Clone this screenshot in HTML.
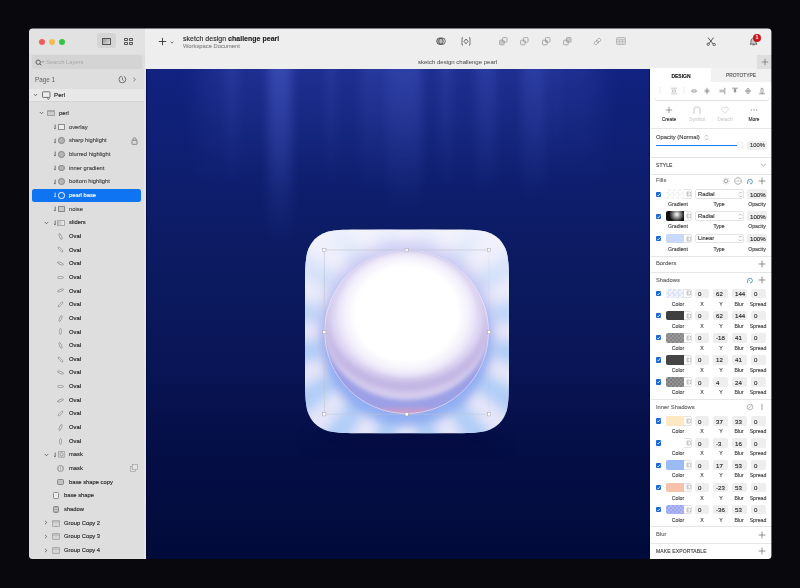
<!DOCTYPE html><html><head><meta charset="utf-8"><style>
*{margin:0;padding:0;box-sizing:border-box}
html,body{width:800px;height:588px;overflow:hidden;background:#08080d;font-family:"Liberation Sans",sans-serif}
#win{position:absolute;left:0;top:0;width:800px;height:588px;clip-path:inset(28.6px 28.6px 28.9px 29px round 3.5px);filter:blur(0.5px)}
.a{position:absolute}
.t{position:absolute;white-space:nowrap;line-height:1;-webkit-text-stroke:0.13px currentColor;will-change:transform}
</style></head><body><div id="win">
<div class="a" style="left:0px;top:0px;width:145px;height:588px;background:#dedede"></div>
<div class="a" style="left:0px;top:0px;width:145px;height:54px;background:#e2e2e2"></div>
<div class="a" style="left:145px;top:0px;width:655px;height:69px;background:#eeeeee"></div>
<div class="a" style="left:145px;top:69px;width:506px;height:520px;background:#0d1a63;overflow:hidden"></div>
<div class="a" style="left:650px;top:69px;width:150px;height:520px;background:#fff"></div>
<div class="a" style="left:38.550000000000004px;top:38.550000000000004px;width:6.1px;height:6.1px;border-radius:50%;background:#ed5e5b"></div>
<div class="a" style="left:48.75px;top:38.550000000000004px;width:6.1px;height:6.1px;border-radius:50%;background:#f3bb4d"></div>
<div class="a" style="left:58.75px;top:38.550000000000004px;width:6.1px;height:6.1px;border-radius:50%;background:#33c447"></div>
<div class="a" style="left:96.5px;top:33px;width:19.7px;height:15.3px;background:#d5d5d5;border-radius:2.5px"></div>
<div class="a" style="left:102.4px;top:37.9px;width:8.6px;height:6.9px;border:1px solid #555;border-radius:0.6px;background:linear-gradient(135deg,#999,#ddd)"></div>
<div class="a" style="left:124px;top:38.3px;width:3.8px;height:2.9px;border:0.9px solid #555;border-radius:0.8px"></div>
<div class="a" style="left:124px;top:41.8px;width:3.8px;height:2.9px;border:0.9px solid #555;border-radius:0.8px"></div>
<div class="a" style="left:129.2px;top:38.3px;width:3.8px;height:2.9px;border:0.9px solid #555;border-radius:0.8px"></div>
<div class="a" style="left:129.2px;top:41.8px;width:3.8px;height:2.9px;border:0.9px solid #555;border-radius:0.8px"></div>
<div class="a" style="left:31.7px;top:55.3px;width:110.3px;height:13.3px;background:#d4d4d4;border-radius:2px"></div>
<svg class="a" style="left:34.5px;top:58.5px;" width="10" height="8" viewBox="0 0 10 8"><circle cx="3.2" cy="3.2" r="2.2" fill="none" stroke="#444" stroke-width="0.8"/><path d="M4.8 4.8 L6.4 6.4" stroke="#444" stroke-width="0.8"/><path d="M7 2.4 l0.9 0.9 l0.9 -0.9" fill="none" stroke="#444" stroke-width="0.7"/></svg>
<div class="t" style="left:46.3px;top:60.08px;font-size:5.8px;color:#a8a8a8;font-weight:normal;-webkit-text-stroke:0">Search Layers</div>
<div class="t" style="left:35.2px;top:76.68px;font-size:6.3px;color:#666;font-weight:normal;-webkit-text-stroke:0.05px #666">Page 1</div>
<svg class="a" style="left:118px;top:75px;" width="9" height="9" viewBox="0 0 9 9"><circle cx="4.4" cy="4.4" r="3.4" fill="none" stroke="#555" stroke-width="0.8" stroke-dasharray="15 2"/><path d="M4.4 2.4 V4.6 L5.6 5.6" fill="none" stroke="#555" stroke-width="0.8"/></svg>
<svg class="a" style="left:132px;top:77px;" width="5" height="5" viewBox="0 0 5 5"><path d="M1.5 0.8 L3.4 2.5 L1.5 4.2" fill="none" stroke="#666" stroke-width="0.8"/></svg>
<div class="a" style="left:29px;top:88.5px;width:116px;height:12.8px;background:#e8e8e8"></div>
<div class="a" style="left:29px;top:101.3px;width:116px;height:0.7px;background:#d4d4d4"></div>
<svg class="a" style="left:33.1px;top:93.2px;" width="5" height="4" viewBox="0 0 5 4"><path d="M0.8 1 L2.5 2.8 L4.2 1" fill="none" stroke="#555" stroke-width="0.8"/></svg>
<svg class="a" style="left:42px;top:90.5px;" width="9" height="9" viewBox="0 0 9 9"><rect x="0.5" y="0.8" width="7.5" height="5.6" rx="0.6" fill="#eee" stroke="#555" stroke-width="0.8"/><path d="M5 7.2 L6.5 8.6 L7.5 6.8" fill="none" stroke="#555" stroke-width="0.7"/></svg>
<div class="t" style="left:53.9px;top:92.02px;font-size:6.2px;color:#1a1a1a;font-weight:normal;">Perl</div>
<svg class="a" style="left:39.0px;top:111.3px;" width="5" height="4" viewBox="0 0 5 4"><path d="M0.8 1 L2.5 2.8 L4.2 1" fill="none" stroke="#555" stroke-width="0.8"/></svg>
<svg class="a" style="left:47px;top:109.8px;" width="8" height="6" viewBox="0 0 8 6"><rect x="0.4" y="0.4" width="7.2" height="5.2" rx="0.5" fill="#ccc" stroke="#777" stroke-width="0.6"/><rect x="0.4" y="0.4" width="7.2" height="1.6" fill="#aaa"/></svg>
<div class="t" style="left:58.75px;top:110.98px;font-size:5.8px;color:#262626;font-weight:normal;">perl</div>
<svg class="a" style="left:52.5px;top:124.1px;" width="3.5" height="6" viewBox="0 0 3.5 6"><path d="M2.2 0.6 V5 M2.2 5 L0.9 3.9" fill="none" stroke="#444" stroke-width="0.7"/></svg>
<div class="a" style="left:58.4px;top:123.89999999999999px;width:6.3px;height:6.3px;border:0.6px solid #8a8a8a;border-radius:0.6px;background:#ececec"></div>
<div class="t" style="left:68.9px;top:124.78px;font-size:5.8px;color:#444;font-weight:normal;">overlay</div>
<svg class="a" style="left:52.5px;top:137.75px;" width="3.5" height="6" viewBox="0 0 3.5 6"><path d="M2.2 0.6 V5 M2.2 5 L0.9 3.9" fill="none" stroke="#444" stroke-width="0.7"/></svg>
<div class="a" style="left:58.4px;top:137.45px;width:6.6px;height:6.6px;border:0.6px solid #888;border-radius:50%;background:#b4b4b4"></div>
<div class="t" style="left:68.9px;top:138.43px;font-size:5.8px;color:#444;font-weight:normal;">sharp highlight</div>
<svg class="a" style="left:130.5px;top:137.05px;" width="7" height="8" viewBox="0 0 7 8"><rect x="1" y="3.3" width="5" height="4" rx="0.5" fill="none" stroke="#666" stroke-width="0.7"/><path d="M2 3.3 V2.2 A1.5 1.5 0 0 1 5 2.2 V3.3" fill="none" stroke="#666" stroke-width="0.7"/></svg>
<svg class="a" style="left:52.5px;top:151.4px;" width="3.5" height="6" viewBox="0 0 3.5 6"><path d="M2.2 0.6 V5 M2.2 5 L0.9 3.9" fill="none" stroke="#444" stroke-width="0.7"/></svg>
<div class="a" style="left:58.4px;top:151.1px;width:6.6px;height:6.6px;border:0.6px solid #888;border-radius:50%;background:#b4b4b4"></div>
<div class="t" style="left:68.9px;top:152.08px;font-size:5.8px;color:#444;font-weight:normal;">blurred highlight</div>
<svg class="a" style="left:52.5px;top:165.05px;" width="3.5" height="6" viewBox="0 0 3.5 6"><path d="M2.2 0.6 V5 M2.2 5 L0.9 3.9" fill="none" stroke="#444" stroke-width="0.7"/></svg>
<div class="a" style="left:58.4px;top:164.75px;width:6.6px;height:6.6px;border:0.6px solid #888;border-radius:50%;background:#b4b4b4"></div>
<div class="t" style="left:68.9px;top:165.73px;font-size:5.8px;color:#444;font-weight:normal;">inner gradient</div>
<svg class="a" style="left:52.5px;top:178.7px;" width="3.5" height="6" viewBox="0 0 3.5 6"><path d="M2.2 0.6 V5 M2.2 5 L0.9 3.9" fill="none" stroke="#444" stroke-width="0.7"/></svg>
<div class="a" style="left:58.4px;top:178.39999999999998px;width:6.6px;height:6.6px;border:0.6px solid #888;border-radius:50%;background:#b4b4b4"></div>
<div class="t" style="left:68.9px;top:179.38px;font-size:5.8px;color:#444;font-weight:normal;">bottom highlight</div>
<div class="a" style="left:31.7px;top:189.04999999999998px;width:109.5px;height:12.8px;background:#0e74f2;border-radius:2.5px"></div>
<svg class="a" style="left:52.5px;top:192.35px;" width="3.5" height="6" viewBox="0 0 3.5 6"><path d="M2.2 0.6 V5 M2.2 5 L0.9 3.9" fill="none" stroke="#fff" stroke-width="0.7"/></svg>
<div class="a" style="left:58.4px;top:192.04999999999998px;width:6.6px;height:6.6px;border:0.9px solid #fff;border-radius:50%"></div>
<div class="t" style="left:68.9px;top:193.03px;font-size:5.8px;color:#fff;font-weight:normal;">pearl base</div>
<svg class="a" style="left:52.5px;top:206.0px;" width="3.5" height="6" viewBox="0 0 3.5 6"><path d="M2.2 0.6 V5 M2.2 5 L0.9 3.9" fill="none" stroke="#444" stroke-width="0.7"/></svg>
<div class="a" style="left:58.2px;top:205.8px;width:6.5px;height:6.5px;border:0.7px solid #888;border-radius:0.8px;background:#c9c9c9"></div>
<div class="t" style="left:68.9px;top:206.68px;font-size:5.8px;color:#444;font-weight:normal;">noise</div>
<svg class="a" style="left:43.7px;top:220.64999999999998px;" width="5" height="4" viewBox="0 0 5 4"><path d="M0.8 1 L2.5 2.8 L4.2 1" fill="none" stroke="#555" stroke-width="0.8"/></svg>
<svg class="a" style="left:52.5px;top:219.64999999999998px;" width="3.5" height="6" viewBox="0 0 3.5 6"><path d="M2.2 0.6 V5 M2.2 5 L0.9 3.9" fill="none" stroke="#444" stroke-width="0.7"/></svg>
<div class="a" style="left:57.2px;top:219.64999999999998px;width:8.2px;height:6px;background:linear-gradient(90deg,#bbb,#eee);border:0.5px solid #aaa"></div>
<div class="t" style="left:68.9px;top:220.33px;font-size:5.8px;color:#262626;font-weight:normal;">sliders</div>
<svg class="a" style="left:57.3px;top:232.8px;" width="7" height="7" viewBox="0 0 7 7"><g transform="rotate(67.5 3.5 3.5)"><ellipse cx="3.5" cy="3.5" rx="3.2" ry="1.0" fill="#e4e4e4" stroke="#777" stroke-width="0.55"/></g></svg>
<div class="t" style="left:68.9px;top:233.98px;font-size:5.8px;color:#111;font-weight:normal;">Oval</div>
<svg class="a" style="left:57.3px;top:246.45px;" width="7" height="7" viewBox="0 0 7 7"><g transform="rotate(45 3.5 3.5)"><ellipse cx="3.5" cy="3.5" rx="3.2" ry="1.0" fill="#e4e4e4" stroke="#777" stroke-width="0.55"/></g></svg>
<div class="t" style="left:68.9px;top:247.63px;font-size:5.8px;color:#111;font-weight:normal;">Oval</div>
<svg class="a" style="left:57.3px;top:260.1px;" width="7" height="7" viewBox="0 0 7 7"><g transform="rotate(22.5 3.5 3.5)"><ellipse cx="3.5" cy="3.5" rx="3.2" ry="1.0" fill="#e4e4e4" stroke="#777" stroke-width="0.55"/></g></svg>
<div class="t" style="left:68.9px;top:261.28px;font-size:5.8px;color:#111;font-weight:normal;">Oval</div>
<svg class="a" style="left:57.3px;top:273.75px;" width="7" height="7" viewBox="0 0 7 7"><g transform="rotate(0 3.5 3.5)"><ellipse cx="3.5" cy="3.5" rx="3.2" ry="1.0" fill="#e4e4e4" stroke="#777" stroke-width="0.55"/></g></svg>
<div class="t" style="left:68.9px;top:274.93px;font-size:5.8px;color:#111;font-weight:normal;">Oval</div>
<svg class="a" style="left:57.3px;top:287.4px;" width="7" height="7" viewBox="0 0 7 7"><g transform="rotate(-22.5 3.5 3.5)"><ellipse cx="3.5" cy="3.5" rx="3.2" ry="1.0" fill="#e4e4e4" stroke="#777" stroke-width="0.55"/></g></svg>
<div class="t" style="left:68.9px;top:288.58px;font-size:5.8px;color:#111;font-weight:normal;">Oval</div>
<svg class="a" style="left:57.3px;top:301.05px;" width="7" height="7" viewBox="0 0 7 7"><g transform="rotate(-45 3.5 3.5)"><ellipse cx="3.5" cy="3.5" rx="3.2" ry="1.0" fill="#e4e4e4" stroke="#777" stroke-width="0.55"/></g></svg>
<div class="t" style="left:68.9px;top:302.23px;font-size:5.8px;color:#111;font-weight:normal;">Oval</div>
<svg class="a" style="left:57.3px;top:314.7px;" width="7" height="7" viewBox="0 0 7 7"><g transform="rotate(-67.5 3.5 3.5)"><ellipse cx="3.5" cy="3.5" rx="3.2" ry="1.0" fill="#e4e4e4" stroke="#777" stroke-width="0.55"/></g></svg>
<div class="t" style="left:68.9px;top:315.88px;font-size:5.8px;color:#111;font-weight:normal;">Oval</div>
<svg class="a" style="left:57.3px;top:328.35px;" width="7" height="7" viewBox="0 0 7 7"><g transform="rotate(90 3.5 3.5)"><ellipse cx="3.5" cy="3.5" rx="3.2" ry="1.0" fill="#e4e4e4" stroke="#777" stroke-width="0.55"/></g></svg>
<div class="t" style="left:68.9px;top:329.53px;font-size:5.8px;color:#111;font-weight:normal;">Oval</div>
<svg class="a" style="left:57.3px;top:342.0px;" width="7" height="7" viewBox="0 0 7 7"><g transform="rotate(67.5 3.5 3.5)"><ellipse cx="3.5" cy="3.5" rx="3.2" ry="1.0" fill="#e4e4e4" stroke="#777" stroke-width="0.55"/></g></svg>
<div class="t" style="left:68.9px;top:343.18px;font-size:5.8px;color:#111;font-weight:normal;">Oval</div>
<svg class="a" style="left:57.3px;top:355.65px;" width="7" height="7" viewBox="0 0 7 7"><g transform="rotate(45 3.5 3.5)"><ellipse cx="3.5" cy="3.5" rx="3.2" ry="1.0" fill="#e4e4e4" stroke="#777" stroke-width="0.55"/></g></svg>
<div class="t" style="left:68.9px;top:356.83px;font-size:5.8px;color:#111;font-weight:normal;">Oval</div>
<svg class="a" style="left:57.3px;top:369.3px;" width="7" height="7" viewBox="0 0 7 7"><g transform="rotate(22.5 3.5 3.5)"><ellipse cx="3.5" cy="3.5" rx="3.2" ry="1.0" fill="#e4e4e4" stroke="#777" stroke-width="0.55"/></g></svg>
<div class="t" style="left:68.9px;top:370.48px;font-size:5.8px;color:#111;font-weight:normal;">Oval</div>
<svg class="a" style="left:57.3px;top:382.95000000000005px;" width="7" height="7" viewBox="0 0 7 7"><g transform="rotate(0 3.5 3.5)"><ellipse cx="3.5" cy="3.5" rx="3.2" ry="1.0" fill="#e4e4e4" stroke="#777" stroke-width="0.55"/></g></svg>
<div class="t" style="left:68.9px;top:384.13px;font-size:5.8px;color:#111;font-weight:normal;">Oval</div>
<svg class="a" style="left:57.3px;top:396.6px;" width="7" height="7" viewBox="0 0 7 7"><g transform="rotate(-22.5 3.5 3.5)"><ellipse cx="3.5" cy="3.5" rx="3.2" ry="1.0" fill="#e4e4e4" stroke="#777" stroke-width="0.55"/></g></svg>
<div class="t" style="left:68.9px;top:397.78px;font-size:5.8px;color:#111;font-weight:normal;">Oval</div>
<svg class="a" style="left:57.3px;top:410.25px;" width="7" height="7" viewBox="0 0 7 7"><g transform="rotate(-45 3.5 3.5)"><ellipse cx="3.5" cy="3.5" rx="3.2" ry="1.0" fill="#e4e4e4" stroke="#777" stroke-width="0.55"/></g></svg>
<div class="t" style="left:68.9px;top:411.43px;font-size:5.8px;color:#111;font-weight:normal;">Oval</div>
<svg class="a" style="left:57.3px;top:423.9px;" width="7" height="7" viewBox="0 0 7 7"><g transform="rotate(-67.5 3.5 3.5)"><ellipse cx="3.5" cy="3.5" rx="3.2" ry="1.0" fill="#e4e4e4" stroke="#777" stroke-width="0.55"/></g></svg>
<div class="t" style="left:68.9px;top:425.08px;font-size:5.8px;color:#111;font-weight:normal;">Oval</div>
<svg class="a" style="left:57.3px;top:437.54999999999995px;" width="7" height="7" viewBox="0 0 7 7"><g transform="rotate(90 3.5 3.5)"><ellipse cx="3.5" cy="3.5" rx="3.2" ry="1.0" fill="#e4e4e4" stroke="#777" stroke-width="0.55"/></g></svg>
<div class="t" style="left:68.9px;top:438.73px;font-size:5.8px;color:#111;font-weight:normal;">Oval</div>
<svg class="a" style="left:44.1px;top:452.70000000000005px;" width="5" height="4" viewBox="0 0 5 4"><path d="M0.8 1 L2.5 2.8 L4.2 1" fill="none" stroke="#555" stroke-width="0.8"/></svg>
<svg class="a" style="left:52.5px;top:451.70000000000005px;" width="3.5" height="6" viewBox="0 0 3.5 6"><path d="M2.2 0.6 V5 M2.2 5 L0.9 3.9" fill="none" stroke="#444" stroke-width="0.7"/></svg>
<svg class="a" style="left:58.2px;top:451.40000000000003px;" width="7.2" height="6.6" viewBox="0 0 7.2 6.6"><rect x="0.4" y="0.4" width="6.4" height="5.8" rx="0.6" fill="none" stroke="#777" stroke-width="0.6"/><circle cx="3.6" cy="3.3" r="1.7" fill="none" stroke="#777" stroke-width="0.6"/></svg>
<div class="t" style="left:69.1px;top:452.38px;font-size:5.8px;color:#262626;font-weight:normal;">mask</div>
<div class="a" style="left:57.4px;top:465.05px;width:6.8px;height:6.8px;border:0.6px solid #999;border-radius:50%;background:repeating-linear-gradient(90deg,#bbb 0 1px,#ddd 1px 2px)"></div>
<div class="t" style="left:68.7px;top:466.03px;font-size:5.8px;color:#262626;font-weight:normal;">mask</div>
<svg class="a" style="left:129.5px;top:464.35px;" width="8.5" height="8" viewBox="0 0 8.5 8"><rect x="0.5" y="2.5" width="5" height="5" fill="none" stroke="#999" stroke-width="0.6"/><rect x="2.5" y="0.5" width="5" height="5" fill="#e3e3e3" stroke="#999" stroke-width="0.6"/></svg>
<div class="a" style="left:57.4px;top:478.6px;width:6.8px;height:6.8px;border:0.6px solid #888;border-radius:1.5px;background:#c2c2c2"></div>
<div class="t" style="left:68.7px;top:479.68px;font-size:5.8px;color:#262626;font-weight:normal;">base shape copy</div>
<div class="a" style="left:52.5px;top:492.25px;width:6.5px;height:6.8px;border:0.7px solid #888;border-radius:1.5px;background:#ececec"></div>
<div class="t" style="left:63.6px;top:493.33px;font-size:5.8px;color:#262626;font-weight:normal;">base shape</div>
<div class="a" style="left:52.5px;top:505.9px;width:6.5px;height:6.8px;border:0.6px solid #888;border-radius:1.5px;background:repeating-linear-gradient(0deg,#aaa 0 1px,#ccc 1px 2px)"></div>
<div class="t" style="left:63.6px;top:506.98px;font-size:5.8px;color:#262626;font-weight:normal;">shadow</div>
<svg class="a" style="left:44px;top:520.45px;" width="4" height="5" viewBox="0 0 4 5"><path d="M1 0.8 L2.8 2.5 L1 4.2" fill="none" stroke="#555" stroke-width="0.8"/></svg>
<svg class="a" style="left:51.9px;top:519.5500000000001px;" width="8" height="7" viewBox="0 0 8 7"><rect x="0.4" y="0.6" width="7.2" height="5.8" rx="0.5" fill="#d6d6d6" stroke="#888" stroke-width="0.6"/><path d="M0.4 2 H7.6" stroke="#888" stroke-width="0.5"/></svg>
<div class="t" style="left:63.6px;top:520.63px;font-size:5.8px;color:#262626;font-weight:normal;">Group Copy 2</div>
<svg class="a" style="left:44px;top:534.1px;" width="4" height="5" viewBox="0 0 4 5"><path d="M1 0.8 L2.8 2.5 L1 4.2" fill="none" stroke="#555" stroke-width="0.8"/></svg>
<svg class="a" style="left:51.9px;top:533.2px;" width="8" height="7" viewBox="0 0 8 7"><rect x="0.4" y="0.6" width="7.2" height="5.8" rx="0.5" fill="#d6d6d6" stroke="#888" stroke-width="0.6"/><path d="M0.4 2 H7.6" stroke="#888" stroke-width="0.5"/></svg>
<div class="t" style="left:63.6px;top:534.28px;font-size:5.8px;color:#262626;font-weight:normal;">Group Copy 3</div>
<svg class="a" style="left:44px;top:547.75px;" width="4" height="5" viewBox="0 0 4 5"><path d="M1 0.8 L2.8 2.5 L1 4.2" fill="none" stroke="#555" stroke-width="0.8"/></svg>
<svg class="a" style="left:51.9px;top:546.85px;" width="8" height="7" viewBox="0 0 8 7"><rect x="0.4" y="0.6" width="7.2" height="5.8" rx="0.5" fill="#d6d6d6" stroke="#888" stroke-width="0.6"/><path d="M0.4 2 H7.6" stroke="#888" stroke-width="0.5"/></svg>
<div class="t" style="left:63.6px;top:547.93px;font-size:5.8px;color:#262626;font-weight:normal;">Group Copy 4</div>
<svg class="a" style="left:145px;top:69px" width="505" height="490" viewBox="145 69 505 490">
<defs>
<linearGradient id="bg" x1="0" y1="0" x2="0" y2="1">
 <stop offset="0" stop-color="#112280"/><stop offset="0.37" stop-color="#0c1b62"/><stop offset="0.6" stop-color="#091556"/><stop offset="0.75" stop-color="#050f48"/><stop offset="1" stop-color="#010b3a"/>
</linearGradient>
<linearGradient id="rayg" x1="0" y1="0" x2="0" y2="1">
 <stop offset="0" stop-color="#5c70e0" stop-opacity="1"/><stop offset="0.4" stop-color="#5c70e0" stop-opacity="0.65"/><stop offset="1" stop-color="#5c70e0" stop-opacity="0"/>
</linearGradient>
<filter id="rb" x="-3" y="-0.2" width="7" height="1.4"><feGaussianBlur stdDeviation="5 4"/></filter>
<filter id="b1" x="-0.2" y="-0.2" width="1.4" height="1.4"><feGaussianBlur stdDeviation="1"/></filter>
<filter id="b2" x="-0.2" y="-0.2" width="1.4" height="1.4"><feGaussianBlur stdDeviation="2"/></filter>
<filter id="b3" x="-0.3" y="-0.3" width="1.6" height="1.6"><feGaussianBlur stdDeviation="3"/></filter>
<filter id="b4" x="-0.3" y="-0.3" width="1.6" height="1.6"><feGaussianBlur stdDeviation="4"/></filter>
<filter id="b5" x="-0.3" y="-0.3" width="1.6" height="1.6"><feGaussianBlur stdDeviation="5"/></filter>
<filter id="b6" x="-0.5" y="-0.5" width="2" height="2"><feGaussianBlur stdDeviation="6"/></filter>
<filter id="b8" x="-0.5" y="-0.5" width="2" height="2"><feGaussianBlur stdDeviation="8"/></filter>
<filter id="b10" x="-0.5" y="-0.5" width="2" height="2"><feGaussianBlur stdDeviation="10"/></filter>
<filter id="b12" x="-0.5" y="-0.5" width="2" height="2"><feGaussianBlur stdDeviation="12"/></filter>
<radialGradient id="wg"><stop offset="0" stop-color="#fff"/><stop offset="0.72" stop-color="#fff"/><stop offset="0.88" stop-color="#fff" stop-opacity="0.55"/><stop offset="1" stop-color="#fff" stop-opacity="0"/></radialGradient>
<linearGradient id="topw" x1="0" y1="0" x2="0" y2="1"><stop offset="0" stop-color="#f4f4fd" stop-opacity="0.9"/><stop offset="1" stop-color="#f4f4fd" stop-opacity="0"/></linearGradient>
<clipPath id="sqc"><path d="M356.97 229.60 L457.03 229.60 C471.99 229.60 479.47 230.39 486.22 231.83 C497.41 235.74 502.86 241.19 506.77 252.38 C508.21 259.13 509.00 266.61 509.00 281.57 L509.00 381.23 C509.00 396.19 508.21 403.67 506.77 410.42 C502.86 421.61 497.41 427.06 486.22 430.97 C479.47 432.41 471.99 433.20 457.03 433.20 L356.97 433.20 C342.01 433.20 334.53 432.41 327.78 430.97 C316.59 427.06 311.14 421.61 307.23 410.42 C305.79 403.67 305.00 396.19 305.00 381.23 L305.00 281.57 C305.00 266.61 305.79 259.13 307.23 252.38 C311.14 241.19 316.59 235.74 327.78 231.83 C334.53 230.39 342.01 229.60 356.97 229.60Z"/></clipPath>
<clipPath id="pc"><circle cx="406.6" cy="331.6" r="82.3"/></clipPath>
</defs>
<rect x="145" y="69" width="506" height="490" fill="url(#bg)"/>
<rect x="200" y="40" width="400" height="150" fill="url(#rayg)" opacity="0.2" filter="url(#b12)"/><rect x="225.0" y="50" width="14" height="139" fill="url(#rayg)" opacity="0.14" filter="url(#rb)"/><rect x="268.0" y="50" width="24" height="194" fill="url(#rayg)" opacity="0.42" filter="url(#rb)"/><rect x="326.0" y="50" width="10" height="139" fill="url(#rayg)" opacity="0.16" filter="url(#rb)"/><rect x="360.0" y="50" width="30" height="149" fill="url(#rayg)" opacity="0.16" filter="url(#rb)"/><rect x="388.0" y="50" width="34" height="164" fill="url(#rayg)" opacity="0.3" filter="url(#rb)"/><rect x="440.0" y="50" width="12" height="144" fill="url(#rayg)" opacity="0.18" filter="url(#rb)"/><rect x="476.0" y="50" width="20" height="149" fill="url(#rayg)" opacity="0.22" filter="url(#rb)"/><rect x="522.0" y="50" width="24" height="154" fill="url(#rayg)" opacity="0.24" filter="url(#rb)"/><rect x="551.0" y="50" width="10" height="129" fill="url(#rayg)" opacity="0.1" filter="url(#rb)"/>
<ellipse cx="406.6" cy="440" rx="100" ry="10" fill="#000530" opacity="0.25" filter="url(#b8)"/>
<path d="M356.97 229.60 L457.03 229.60 C471.99 229.60 479.47 230.39 486.22 231.83 C497.41 235.74 502.86 241.19 506.77 252.38 C508.21 259.13 509.00 266.61 509.00 281.57 L509.00 381.23 C509.00 396.19 508.21 403.67 506.77 410.42 C502.86 421.61 497.41 427.06 486.22 430.97 C479.47 432.41 471.99 433.20 457.03 433.20 L356.97 433.20 C342.01 433.20 334.53 432.41 327.78 430.97 C316.59 427.06 311.14 421.61 307.23 410.42 C305.79 403.67 305.00 396.19 305.00 381.23 L305.00 281.57 C305.00 266.61 305.79 259.13 307.23 252.38 C311.14 241.19 316.59 235.74 327.78 231.83 C334.53 230.39 342.01 229.60 356.97 229.60Z" fill="#e6e6f9"/>
<g clip-path="url(#sqc)">
 <g fill="#a2c6f6" opacity="0.8" filter="url(#b6)"><path d="M406.6 331.6 L565.8 347.6 L559.8 377.7Z"/><path d="M406.6 331.6 L547.5 407.3 L530.5 432.8Z"/><path d="M406.6 331.6 L507.8 455.5 L482.3 472.5Z"/><path d="M406.6 331.6 L452.7 484.8 L422.6 490.8Z"/><path d="M406.6 331.6 L390.6 490.8 L360.5 484.8Z"/><path d="M406.6 331.6 L330.9 472.5 L305.4 455.5Z"/><path d="M406.6 331.6 L282.7 432.8 L265.7 407.3Z"/><path d="M406.6 331.6 L253.4 377.7 L247.4 347.6Z"/><path d="M406.6 331.6 L247.4 315.6 L253.4 285.5Z"/><path d="M406.6 331.6 L265.7 255.9 L282.7 230.4Z"/><path d="M406.6 331.6 L305.4 207.7 L330.9 190.7Z"/><path d="M406.6 331.6 L360.5 178.4 L390.6 172.4Z"/><path d="M406.6 331.6 L422.6 172.4 L452.7 178.4Z"/><path d="M406.6 331.6 L482.3 190.7 L507.8 207.7Z"/><path d="M406.6 331.6 L530.5 230.4 L547.5 255.9Z"/><path d="M406.6 331.6 L559.8 285.5 L565.8 315.6Z"/></g>
 <rect x="305" y="230" width="204" height="110" fill="url(#topw)"/>
 <circle cx="406.6" cy="329.6" r="89.3" fill="#c9c8f1" opacity="0.75" filter="url(#b6)"/>
 <circle cx="406.6" cy="341.6" r="84.3" fill="#86a8f2" opacity="0.85" filter="url(#b5)"/>
</g>
<g clip-path="url(#pc)">
 <rect x="324.3" y="249.3" width="164.6" height="164.6" fill="#9ca0e6"/>
 <ellipse cx="406.6" cy="414.90000000000003" rx="60" ry="6.5" fill="#c89ecc" filter="url(#b2)"/>
 <ellipse cx="406.6" cy="324.6" rx="83.8" ry="75.3" fill="#d6cdee" filter="url(#b2)"/>
 <ellipse cx="406.6" cy="327.6" rx="81.3" ry="63.3" fill="#c0b2e2" filter="url(#b3)"/>
 <ellipse cx="406.6" cy="317.6" rx="77.3" ry="62.3" fill="#e4def6" filter="url(#b4)"/>
 <ellipse cx="406.6" cy="313.6" rx="71" ry="65" fill="url(#wg)"/>
</g>
<circle cx="406.6" cy="331.6" r="81.89999999999999" fill="none" stroke="#f4f0ff" stroke-width="0.7" opacity="0.8"/>
<path d="M324.3 414.3 V250 H489" fill="none" stroke="#c3c3cf" stroke-width="0.6"/>
<path d="M324.3 414.3 H489" fill="none" stroke="#c3c3cf" stroke-width="0.6" opacity="0.8"/><path d="M489 414.3 V250" fill="none" stroke="#c3c3cf" stroke-width="0.5" opacity="0.3"/>
<rect x="322.7" y="248.4" width="3.2" height="3.2" fill="#fff" stroke="#a0a0a8" stroke-width="0.5"/><rect x="322.7" y="330.54999999999995" width="3.2" height="3.2" fill="#fff" stroke="#a0a0a8" stroke-width="0.5"/><rect x="322.7" y="412.7" width="3.2" height="3.2" fill="#fff" stroke="#a0a0a8" stroke-width="0.5"/><rect x="405.04999999999995" y="248.4" width="3.2" height="3.2" fill="#fff" stroke="#a0a0a8" stroke-width="0.5"/><rect x="405.04999999999995" y="412.7" width="3.2" height="3.2" fill="#fff" stroke="#a0a0a8" stroke-width="0.5"/><rect x="487.4" y="248.4" width="3.2" height="3.2" fill="#fff" stroke="#a0a0a8" stroke-width="0.5"/><rect x="487.4" y="330.54999999999995" width="3.2" height="3.2" fill="#fff" stroke="#a0a0a8" stroke-width="0.5"/><rect x="487.4" y="412.7" width="3.2" height="3.2" fill="#fff" stroke="#a0a0a8" stroke-width="0.5"/>
</svg>
<div class="a" style="left:648.8px;top:69px;width:1.2px;height:490px;background:rgba(0,5,40,0.45)"></div>
<div class="a" style="left:143.8px;top:69px;width:2px;height:490px;background:#e4e4ec"></div>
<div class="a" style="left:145.8px;top:69px;width:1.3px;height:490px;background:rgba(0,5,40,0.55)"></div>
<div class="a" style="left:711px;top:55px;width:61px;height:14px;background:#eeeeee"></div>
<div class="a" style="left:711px;top:68.3px;width:61px;height:14px;background:#f1f1f1"></div>
<div class="a" style="left:650px;top:68.3px;width:61px;height:14px;background:#fff"></div>
<div class="t" style="left:660.7px;width:40px;text-align:center;top:74.1px;font-size:5px;color:#1a1a1a;font-weight:bold">DESIGN</div>
<div class="t" style="left:721.3px;width:40px;text-align:center;top:74.1px;font-size:4.9px;color:#555">PROTOTYPE</div>
<div class="a" style="left:655px;top:84.5px;width:114px;height:15.6px;background:#fff;border-radius:3px;box-shadow:0 1px 1.2px rgba(0,0,0,0.14)"></div>
<svg class="a" style="left:655.9px;top:86.9px;" width="8" height="8" viewBox="0 0 8 8"><path d="M4 0.5 V7.5" stroke="#c4c4c4" stroke-width="0.7" stroke-dasharray="0.8 1"/></svg>
<svg class="a" style="left:669.6px;top:86.9px;" width="8" height="8" viewBox="0 0 8 8"><path d="M1 1.2 H7 M1 6.8 H7" stroke="#aaa" stroke-width="0.6"/><rect x="2.2" y="3" width="3.6" height="2" fill="none" stroke="#aaa" stroke-width="0.6"/></svg>
<svg class="a" style="left:680.3px;top:86.9px;" width="8" height="8" viewBox="0 0 8 8"><path d="M4 0.5 V7.5" stroke="#c4c4c4" stroke-width="0.7" stroke-dasharray="0.8 1"/></svg>
<svg class="a" style="left:690.2px;top:86.9px;" width="8" height="8" viewBox="0 0 8 8"><rect x="1.8" y="3" width="4.4" height="2" rx="0.4" fill="none" stroke="#666" stroke-width="0.65"/></svg>
<svg class="a" style="left:703.2px;top:86.9px;" width="8" height="8" viewBox="0 0 8 8"><path d="M4 0.8 V7.2" stroke="#666" stroke-width="0.65"/><path d="M1.5 3.2 H6.5 M1.5 4.8 H6.5" stroke="#666" stroke-width="0.6"/></svg>
<svg class="a" style="left:717.6px;top:86.9px;" width="8" height="8" viewBox="0 0 8 8"><path d="M6.8 0.8 V7.2" stroke="#666" stroke-width="0.65"/><path d="M1.5 3.2 H6 M1.5 4.8 H6" stroke="#666" stroke-width="0.6"/></svg>
<svg class="a" style="left:730.6px;top:86.9px;" width="8" height="8" viewBox="0 0 8 8"><path d="M1 1.2 H7" stroke="#777" stroke-width="0.7"/><path d="M2.8 1.5 H5.2 V5.5 H2.8 Z" fill="#999"/></svg>
<svg class="a" style="left:744.3px;top:86.9px;" width="8" height="8" viewBox="0 0 8 8"><path d="M1 4 H7" stroke="#666" stroke-width="0.65"/><rect x="3" y="1.6" width="2" height="4.8" rx="0.4" fill="none" stroke="#666" stroke-width="0.6"/></svg>
<svg class="a" style="left:758.0px;top:86.9px;" width="8" height="8" viewBox="0 0 8 8"><path d="M1 6.8 H7" stroke="#666" stroke-width="0.65"/><rect x="3" y="1.4" width="2" height="4.6" rx="0.4" fill="none" stroke="#666" stroke-width="0.6"/></svg>
<svg class="a" style="left:664.6px;top:106.4px;" width="8" height="8" viewBox="0 0 8 8"><path d="M4 0.8 V7.2 M0.8 4 H7.2" stroke="#777" stroke-width="0.7"/></svg>
<svg class="a" style="left:693px;top:106.2px;" width="8" height="8.5" viewBox="0 0 8 8.5"><path d="M1 8 V4 A3 3 0 0 1 7 4 V8" fill="none" stroke="#ddd" stroke-width="1.6"/></svg>
<svg class="a" style="left:721px;top:106.2px;" width="8" height="8.5" viewBox="0 0 8 8.5"><path d="M4 7.5 L1 4.2 A1.8 1.8 0 0 1 4 2 A1.8 1.8 0 0 1 7 4.2 Z" fill="none" stroke="#ddd" stroke-width="1"/></svg>
<svg class="a" style="left:749.7px;top:108.4px;" width="8" height="4" viewBox="0 0 8 4"><path d="M0.8 2 H2 M3.4 2 H4.6 M6 2 H7.2" stroke="#777" stroke-width="0.9"/></svg>
<div class="t" style="left:648.6px;width:40px;text-align:center;top:118.1px;font-size:4.8px;color:#333">Create</div>
<div class="t" style="left:677px;width:40px;text-align:center;top:118.1px;font-size:4.8px;color:#d2d2d2">Symbol</div>
<div class="t" style="left:705px;width:40px;text-align:center;top:118.1px;font-size:4.8px;color:#d2d2d2">Detach</div>
<div class="t" style="left:733.7px;width:40px;text-align:center;top:118.1px;font-size:4.8px;color:#333">More</div>
<div class="a" style="left:651px;top:128.4px;width:121px;height:0.6px;background:#e6e6e6"></div>
<div class="t" style="left:656px;top:134.78px;font-size:5.8px;color:#444;font-weight:normal;">Opacity (Normal)</div>
<svg class="a" style="left:703.5px;top:133.6px;" width="5" height="7" viewBox="0 0 5 7"><path d="M1 2.6 L2.5 1.1 L4 2.6 M1 4.4 L2.5 5.9 L4 4.4" fill="none" stroke="#888" stroke-width="0.6"/></svg>
<div class="a" style="left:656px;top:145px;width:84px;height:1px;background:#1b7bf4;border-radius:1px"></div>
<div class="a" style="left:736.5px;top:141.8px;width:6.6px;height:6.6px;background:#fff;border-radius:50%;box-shadow:0 0 1px rgba(0,0,0,0.35)"></div>
<div class="a" style="left:747px;top:141px;width:19.6px;height:9px;background:#efefef;border-radius:2px"></div>
<div class="t" style="left:750px;top:143.18px;font-size:5.8px;color:#333;font-weight:normal;">100%</div>
<div class="a" style="left:651px;top:156.5px;width:121px;height:0.6px;background:#e6e6e6"></div>
<div class="t" style="left:656px;top:163.00px;font-size:5.0px;color:#444;font-weight:normal;letter-spacing:0.15px">STYLE</div>
<svg class="a" style="left:759.5px;top:163px;" width="7" height="4" viewBox="0 0 7 4"><path d="M1 0.8 L3.5 3 L6 0.8" fill="none" stroke="#888" stroke-width="0.7"/></svg>
<div class="a" style="left:651px;top:174px;width:121px;height:0.6px;background:#e6e6e6"></div>
<div class="t" style="left:656px;top:178.18px;font-size:5.8px;color:#666;font-weight:normal;">Fills</div>
<svg class="a" style="left:721.7px;top:176.5px;" width="8" height="8" viewBox="0 0 8 8"><circle cx="4" cy="4" r="1.8" fill="none" stroke="#888" stroke-width="0.7"/><path d="M4 0.6 V1.6 M4 6.4 V7.4 M0.6 4 H1.6 M6.4 4 H7.4 M1.6 1.6 L2.3 2.3 M5.7 5.7 L6.4 6.4 M6.4 1.6 L5.7 2.3 M1.6 6.4 L2.3 5.7" stroke="#888" stroke-width="0.6"/></svg>
<svg class="a" style="left:733.9px;top:176.5px;" width="8" height="8" viewBox="0 0 8 8"><path d="M2.6 0.9 H5.4 L7.1 2.6 V5.4 L5.4 7.1 H2.6 L0.9 5.4 V2.6 Z" fill="none" stroke="#888" stroke-width="0.7"/><path d="M2.5 4 H5.5" stroke="#888" stroke-width="0.6"/></svg>
<svg class="a" style="left:745.6px;top:176.5px;" width="8" height="8" viewBox="0 0 8 8"><path d="M1.6 7 V4.6 A2.4 2.4 0 1 1 4 7" fill="none" stroke="#3a7fd0" stroke-width="0.8"/><path d="M2.6 3.8 L4.2 5.4" stroke="#3a7fd0" stroke-width="0.7"/></svg>
<svg class="a" style="left:758px;top:176.5px;" width="8" height="8" viewBox="0 0 8 8"><path d="M4 0.6 V7.4 M0.6 4 H7.4" stroke="#666" stroke-width="0.7"/></svg>
<div class="a" style="left:656px;top:191.5px;width:5.4px;height:5.4px;background:#1a68d6;border-radius:1px"></div>
<svg class="a" style="left:656px;top:191.5px;" width="5.4" height="5.4" viewBox="0 0 5.4 5.4"><path d="M1.3 2.9 L2.3 3.9 L4.2 1.5" fill="none" stroke="#fff" stroke-width="0.8"/></svg>
<div class="a" style="left:665.7px;top:189.29999999999998px;width:26px;height:9.8px;background:#fff;border-radius:2px;border:0.6px solid #e2e2e2"></div>
<div class="a" style="left:665.7px;top:189.29999999999998px;width:18px;height:9.8px;background:repeating-conic-gradient(#f4f4f4 0 25%,#fff 0 50%) 0 0/5px 5px;border-radius:2px 0 0 2px"></div>
<svg class="a" style="left:685.5px;top:191.2px;" width="5" height="6" viewBox="0 0 5 6"><path d="M1 1 H3 A1.5 1.5 0 0 1 3 5 H1 Z M1 3 H3" fill="none" stroke="#999" stroke-width="0.6"/></svg>
<div class="a" style="left:694.5px;top:189.29999999999998px;width:49.5px;height:9.8px;background:#fff;border:0.6px solid #e4e4e4;border-radius:2px"></div>
<div class="t" style="left:697.5px;top:191.88px;font-size:5.8px;color:#333;font-weight:normal;">Radial</div>
<svg class="a" style="left:737.5px;top:190.7px;" width="5" height="7" viewBox="0 0 5 7"><path d="M1 2.5 L2.5 1 L4 2.5 M1 4.5 L2.5 6 L4 4.5" fill="none" stroke="#888" stroke-width="0.6"/></svg>
<div class="a" style="left:747.2px;top:189.29999999999998px;width:19.399999999999977px;height:9.8px;background:#eeeeee;border-radius:2px"></div>
<div class="t" style="left:750.4000000000001px;top:191.76px;font-size:6.1px;color:#262626;font-weight:normal;">100%</div>
<div class="t" style="left:663px;width:30px;text-align:center;top:202.29999999999998px;font-size:5.2px;color:#444">Gradient</div>
<div class="t" style="left:704px;width:30px;text-align:center;top:202.29999999999998px;font-size:5.2px;color:#444">Type</div>
<div class="t" style="left:741.5px;width:30px;text-align:center;top:202.29999999999998px;font-size:5.2px;color:#444">Opacity</div>
<div class="a" style="left:656px;top:213.60000000000002px;width:5.4px;height:5.4px;background:#1a68d6;border-radius:1px"></div>
<svg class="a" style="left:656px;top:213.60000000000002px;" width="5.4" height="5.4" viewBox="0 0 5.4 5.4"><path d="M1.3 2.9 L2.3 3.9 L4.2 1.5" fill="none" stroke="#fff" stroke-width="0.8"/></svg>
<div class="a" style="left:665.7px;top:211.4px;width:26px;height:9.8px;background:#fff;border-radius:2px;border:0.6px solid #e2e2e2"></div>
<div class="a" style="left:665.7px;top:211.4px;width:18px;height:9.8px;background:radial-gradient(circle at 60% 35%,#fff 0,#999 25%,#111 60%);border-radius:2px 0 0 2px"></div>
<svg class="a" style="left:685.5px;top:213.3px;" width="5" height="6" viewBox="0 0 5 6"><path d="M1 1 H3 A1.5 1.5 0 0 1 3 5 H1 Z M1 3 H3" fill="none" stroke="#999" stroke-width="0.6"/></svg>
<div class="a" style="left:694.5px;top:211.4px;width:49.5px;height:9.8px;background:#fff;border:0.6px solid #e4e4e4;border-radius:2px"></div>
<div class="t" style="left:697.5px;top:213.98px;font-size:5.8px;color:#333;font-weight:normal;">Radial</div>
<svg class="a" style="left:737.5px;top:212.8px;" width="5" height="7" viewBox="0 0 5 7"><path d="M1 2.5 L2.5 1 L4 2.5 M1 4.5 L2.5 6 L4 4.5" fill="none" stroke="#888" stroke-width="0.6"/></svg>
<div class="a" style="left:747.2px;top:211.4px;width:19.399999999999977px;height:9.8px;background:#eeeeee;border-radius:2px"></div>
<div class="t" style="left:750.4000000000001px;top:213.86px;font-size:6.1px;color:#262626;font-weight:normal;">100%</div>
<div class="t" style="left:663px;width:30px;text-align:center;top:224.4px;font-size:5.2px;color:#444">Gradient</div>
<div class="t" style="left:704px;width:30px;text-align:center;top:224.4px;font-size:5.2px;color:#444">Type</div>
<div class="t" style="left:741.5px;width:30px;text-align:center;top:224.4px;font-size:5.2px;color:#444">Opacity</div>
<div class="a" style="left:656px;top:235.8px;width:5.4px;height:5.4px;background:#1a68d6;border-radius:1px"></div>
<svg class="a" style="left:656px;top:235.8px;" width="5.4" height="5.4" viewBox="0 0 5.4 5.4"><path d="M1.3 2.9 L2.3 3.9 L4.2 1.5" fill="none" stroke="#fff" stroke-width="0.8"/></svg>
<div class="a" style="left:665.7px;top:233.6px;width:26px;height:9.8px;background:#fff;border-radius:2px;border:0.6px solid #e2e2e2"></div>
<div class="a" style="left:665.7px;top:233.6px;width:18px;height:9.8px;background:#cad9fb;border-radius:2px 0 0 2px"></div>
<svg class="a" style="left:685.5px;top:235.5px;" width="5" height="6" viewBox="0 0 5 6"><path d="M1 1 H3 A1.5 1.5 0 0 1 3 5 H1 Z M1 3 H3" fill="none" stroke="#999" stroke-width="0.6"/></svg>
<div class="a" style="left:694.5px;top:233.6px;width:49.5px;height:9.8px;background:#fff;border:0.6px solid #e4e4e4;border-radius:2px"></div>
<div class="t" style="left:697.5px;top:236.18px;font-size:5.8px;color:#333;font-weight:normal;">Linear</div>
<svg class="a" style="left:737.5px;top:235.0px;" width="5" height="7" viewBox="0 0 5 7"><path d="M1 2.5 L2.5 1 L4 2.5 M1 4.5 L2.5 6 L4 4.5" fill="none" stroke="#888" stroke-width="0.6"/></svg>
<div class="a" style="left:747.2px;top:233.6px;width:19.399999999999977px;height:9.8px;background:#eeeeee;border-radius:2px"></div>
<div class="t" style="left:750.4000000000001px;top:236.06px;font-size:6.1px;color:#262626;font-weight:normal;">100%</div>
<div class="t" style="left:663px;width:30px;text-align:center;top:246.6px;font-size:5.2px;color:#444">Gradient</div>
<div class="t" style="left:704px;width:30px;text-align:center;top:246.6px;font-size:5.2px;color:#444">Type</div>
<div class="t" style="left:741.5px;width:30px;text-align:center;top:246.6px;font-size:5.2px;color:#444">Opacity</div>
<div class="a" style="left:651px;top:255.5px;width:121px;height:0.6px;background:#e6e6e6"></div>
<div class="t" style="left:656px;top:261.28px;font-size:5.8px;color:#666;font-weight:normal;">Borders</div>
<svg class="a" style="left:758px;top:259.6px;" width="8" height="8" viewBox="0 0 8 8"><path d="M4 0.6 V7.4 M0.6 4 H7.4" stroke="#666" stroke-width="0.7"/></svg>
<div class="a" style="left:651px;top:271.7px;width:121px;height:0.6px;background:#e6e6e6"></div>
<div class="t" style="left:656px;top:277.58px;font-size:5.8px;color:#666;font-weight:normal;">Shadows</div>
<svg class="a" style="left:758px;top:275.9px;" width="8" height="8" viewBox="0 0 8 8"><path d="M4 0.6 V7.4 M0.6 4 H7.4" stroke="#666" stroke-width="0.7"/></svg>
<svg class="a" style="left:745.6px;top:275.9px;" width="8" height="8" viewBox="0 0 8 8"><path d="M1.6 7 V4.6 A2.4 2.4 0 1 1 4 7" fill="none" stroke="#3a7fd0" stroke-width="0.8"/><path d="M2.6 3.8 L4.2 5.4" stroke="#3a7fd0" stroke-width="0.7"/></svg>
<div class="a" style="left:656px;top:290.7px;width:5.4px;height:5.4px;background:#1a68d6;border-radius:1px"></div>
<svg class="a" style="left:656px;top:290.7px;" width="5.4" height="5.4" viewBox="0 0 5.4 5.4"><path d="M1.3 2.9 L2.3 3.9 L4.2 1.5" fill="none" stroke="#fff" stroke-width="0.8"/></svg>
<div class="a" style="left:665.7px;top:288.5px;width:26px;height:9.8px;background:#fff;border-radius:2px;border:0.6px solid #e2e2e2"></div>
<div class="a" style="left:665.7px;top:288.5px;width:18px;height:9.8px;background:repeating-conic-gradient(#dde3fa 0 25%,#f3f5fd 0 50%) 0 0/5px 5px;border-radius:2px 0 0 2px"></div>
<svg class="a" style="left:685.5px;top:290.4px;" width="5" height="6" viewBox="0 0 5 6"><path d="M1 1 H3 A1.5 1.5 0 0 1 3 5 H1 Z M1 3 H3" fill="none" stroke="#999" stroke-width="0.6"/></svg>
<div class="a" style="left:694.6px;top:288.5px;width:14.399999999999977px;height:9.8px;background:#eeeeee;border-radius:2px"></div>
<div class="t" style="left:697.8000000000001px;top:290.96px;font-size:6.1px;color:#262626;font-weight:normal;">0</div>
<div class="a" style="left:712.6px;top:288.5px;width:15.899999999999977px;height:9.8px;background:#eeeeee;border-radius:2px"></div>
<div class="t" style="left:715.8000000000001px;top:290.96px;font-size:6.1px;color:#262626;font-weight:normal;">62</div>
<div class="a" style="left:731.8px;top:288.5px;width:15.200000000000045px;height:9.8px;background:#eeeeee;border-radius:2px"></div>
<div class="t" style="left:735.0px;top:290.96px;font-size:6.1px;color:#262626;font-weight:normal;">144</div>
<div class="a" style="left:750.6px;top:288.5px;width:15.600000000000023px;height:9.8px;background:#eeeeee;border-radius:2px"></div>
<div class="t" style="left:753.8000000000001px;top:290.96px;font-size:6.1px;color:#262626;font-weight:normal;">0</div>
<div class="t" style="left:663px;width:30px;text-align:center;top:301.49999999999994px;font-size:5.2px;color:#444">Color</div>
<div class="t" style="left:686.8px;width:30px;text-align:center;top:301.49999999999994px;font-size:5.2px;color:#444">X</div>
<div class="t" style="left:705.5px;width:30px;text-align:center;top:301.49999999999994px;font-size:5.2px;color:#444">Y</div>
<div class="t" style="left:724.4px;width:30px;text-align:center;top:301.49999999999994px;font-size:5.2px;color:#444">Blur</div>
<div class="t" style="left:743.4px;width:30px;text-align:center;top:301.49999999999994px;font-size:5.2px;color:#444">Spread</div>
<div class="a" style="left:656px;top:312.90000000000003px;width:5.4px;height:5.4px;background:#1a68d6;border-radius:1px"></div>
<svg class="a" style="left:656px;top:312.90000000000003px;" width="5.4" height="5.4" viewBox="0 0 5.4 5.4"><path d="M1.3 2.9 L2.3 3.9 L4.2 1.5" fill="none" stroke="#fff" stroke-width="0.8"/></svg>
<div class="a" style="left:665.7px;top:310.70000000000005px;width:26px;height:9.8px;background:#fff;border-radius:2px;border:0.6px solid #e2e2e2"></div>
<div class="a" style="left:665.7px;top:310.70000000000005px;width:18px;height:9.8px;background:#3f3f3f;border-radius:2px 0 0 2px"></div>
<svg class="a" style="left:685.5px;top:312.6px;" width="5" height="6" viewBox="0 0 5 6"><path d="M1 1 H3 A1.5 1.5 0 0 1 3 5 H1 Z M1 3 H3" fill="none" stroke="#999" stroke-width="0.6"/></svg>
<div class="a" style="left:694.6px;top:310.70000000000005px;width:14.399999999999977px;height:9.8px;background:#eeeeee;border-radius:2px"></div>
<div class="t" style="left:697.8000000000001px;top:313.16px;font-size:6.1px;color:#262626;font-weight:normal;">0</div>
<div class="a" style="left:712.6px;top:310.70000000000005px;width:15.899999999999977px;height:9.8px;background:#eeeeee;border-radius:2px"></div>
<div class="t" style="left:715.8000000000001px;top:313.16px;font-size:6.1px;color:#262626;font-weight:normal;">62</div>
<div class="a" style="left:731.8px;top:310.70000000000005px;width:15.200000000000045px;height:9.8px;background:#eeeeee;border-radius:2px"></div>
<div class="t" style="left:735.0px;top:313.16px;font-size:6.1px;color:#262626;font-weight:normal;">144</div>
<div class="a" style="left:750.6px;top:310.70000000000005px;width:15.600000000000023px;height:9.8px;background:#eeeeee;border-radius:2px"></div>
<div class="t" style="left:753.8000000000001px;top:313.16px;font-size:6.1px;color:#262626;font-weight:normal;">0</div>
<div class="t" style="left:663px;width:30px;text-align:center;top:323.7px;font-size:5.2px;color:#444">Color</div>
<div class="t" style="left:686.8px;width:30px;text-align:center;top:323.7px;font-size:5.2px;color:#444">X</div>
<div class="t" style="left:705.5px;width:30px;text-align:center;top:323.7px;font-size:5.2px;color:#444">Y</div>
<div class="t" style="left:724.4px;width:30px;text-align:center;top:323.7px;font-size:5.2px;color:#444">Blur</div>
<div class="t" style="left:743.4px;width:30px;text-align:center;top:323.7px;font-size:5.2px;color:#444">Spread</div>
<div class="a" style="left:656px;top:335.0px;width:5.4px;height:5.4px;background:#1a68d6;border-radius:1px"></div>
<svg class="a" style="left:656px;top:335.0px;" width="5.4" height="5.4" viewBox="0 0 5.4 5.4"><path d="M1.3 2.9 L2.3 3.9 L4.2 1.5" fill="none" stroke="#fff" stroke-width="0.8"/></svg>
<div class="a" style="left:665.7px;top:332.8px;width:26px;height:9.8px;background:#fff;border-radius:2px;border:0.6px solid #e2e2e2"></div>
<div class="a" style="left:665.7px;top:332.8px;width:18px;height:9.8px;background:repeating-conic-gradient(#858585 0 25%,#9c9c9c 0 50%) 0 0/4px 4px;border-radius:2px 0 0 2px"></div>
<svg class="a" style="left:685.5px;top:334.7px;" width="5" height="6" viewBox="0 0 5 6"><path d="M1 1 H3 A1.5 1.5 0 0 1 3 5 H1 Z M1 3 H3" fill="none" stroke="#999" stroke-width="0.6"/></svg>
<div class="a" style="left:694.6px;top:332.8px;width:14.399999999999977px;height:9.8px;background:#eeeeee;border-radius:2px"></div>
<div class="t" style="left:697.8000000000001px;top:335.26px;font-size:6.1px;color:#262626;font-weight:normal;">0</div>
<div class="a" style="left:712.6px;top:332.8px;width:15.899999999999977px;height:9.8px;background:#eeeeee;border-radius:2px"></div>
<div class="t" style="left:715.8000000000001px;top:335.26px;font-size:6.1px;color:#262626;font-weight:normal;">-18</div>
<div class="a" style="left:731.8px;top:332.8px;width:15.200000000000045px;height:9.8px;background:#eeeeee;border-radius:2px"></div>
<div class="t" style="left:735.0px;top:335.26px;font-size:6.1px;color:#262626;font-weight:normal;">41</div>
<div class="a" style="left:750.6px;top:332.8px;width:15.600000000000023px;height:9.8px;background:#eeeeee;border-radius:2px"></div>
<div class="t" style="left:753.8000000000001px;top:335.26px;font-size:6.1px;color:#262626;font-weight:normal;">0</div>
<div class="t" style="left:663px;width:30px;text-align:center;top:345.79999999999995px;font-size:5.2px;color:#444">Color</div>
<div class="t" style="left:686.8px;width:30px;text-align:center;top:345.79999999999995px;font-size:5.2px;color:#444">X</div>
<div class="t" style="left:705.5px;width:30px;text-align:center;top:345.79999999999995px;font-size:5.2px;color:#444">Y</div>
<div class="t" style="left:724.4px;width:30px;text-align:center;top:345.79999999999995px;font-size:5.2px;color:#444">Blur</div>
<div class="t" style="left:743.4px;width:30px;text-align:center;top:345.79999999999995px;font-size:5.2px;color:#444">Spread</div>
<div class="a" style="left:656px;top:357.2px;width:5.4px;height:5.4px;background:#1a68d6;border-radius:1px"></div>
<svg class="a" style="left:656px;top:357.2px;" width="5.4" height="5.4" viewBox="0 0 5.4 5.4"><path d="M1.3 2.9 L2.3 3.9 L4.2 1.5" fill="none" stroke="#fff" stroke-width="0.8"/></svg>
<div class="a" style="left:665.7px;top:355.0px;width:26px;height:9.8px;background:#fff;border-radius:2px;border:0.6px solid #e2e2e2"></div>
<div class="a" style="left:665.7px;top:355.0px;width:18px;height:9.8px;background:#454545;border-radius:2px 0 0 2px"></div>
<svg class="a" style="left:685.5px;top:356.9px;" width="5" height="6" viewBox="0 0 5 6"><path d="M1 1 H3 A1.5 1.5 0 0 1 3 5 H1 Z M1 3 H3" fill="none" stroke="#999" stroke-width="0.6"/></svg>
<div class="a" style="left:694.6px;top:355.0px;width:14.399999999999977px;height:9.8px;background:#eeeeee;border-radius:2px"></div>
<div class="t" style="left:697.8000000000001px;top:357.46px;font-size:6.1px;color:#262626;font-weight:normal;">0</div>
<div class="a" style="left:712.6px;top:355.0px;width:15.899999999999977px;height:9.8px;background:#eeeeee;border-radius:2px"></div>
<div class="t" style="left:715.8000000000001px;top:357.46px;font-size:6.1px;color:#262626;font-weight:normal;">12</div>
<div class="a" style="left:731.8px;top:355.0px;width:15.200000000000045px;height:9.8px;background:#eeeeee;border-radius:2px"></div>
<div class="t" style="left:735.0px;top:357.46px;font-size:6.1px;color:#262626;font-weight:normal;">41</div>
<div class="a" style="left:750.6px;top:355.0px;width:15.600000000000023px;height:9.8px;background:#eeeeee;border-radius:2px"></div>
<div class="t" style="left:753.8000000000001px;top:357.46px;font-size:6.1px;color:#262626;font-weight:normal;">0</div>
<div class="t" style="left:663px;width:30px;text-align:center;top:367.99999999999994px;font-size:5.2px;color:#444">Color</div>
<div class="t" style="left:686.8px;width:30px;text-align:center;top:367.99999999999994px;font-size:5.2px;color:#444">X</div>
<div class="t" style="left:705.5px;width:30px;text-align:center;top:367.99999999999994px;font-size:5.2px;color:#444">Y</div>
<div class="t" style="left:724.4px;width:30px;text-align:center;top:367.99999999999994px;font-size:5.2px;color:#444">Blur</div>
<div class="t" style="left:743.4px;width:30px;text-align:center;top:367.99999999999994px;font-size:5.2px;color:#444">Spread</div>
<div class="a" style="left:656px;top:379.40000000000003px;width:5.4px;height:5.4px;background:#1a68d6;border-radius:1px"></div>
<svg class="a" style="left:656px;top:379.40000000000003px;" width="5.4" height="5.4" viewBox="0 0 5.4 5.4"><path d="M1.3 2.9 L2.3 3.9 L4.2 1.5" fill="none" stroke="#fff" stroke-width="0.8"/></svg>
<div class="a" style="left:665.7px;top:377.20000000000005px;width:26px;height:9.8px;background:#fff;border-radius:2px;border:0.6px solid #e2e2e2"></div>
<div class="a" style="left:665.7px;top:377.20000000000005px;width:18px;height:9.8px;background:repeating-conic-gradient(#7e7e7e 0 25%,#959595 0 50%) 0 0/4px 4px;border-radius:2px 0 0 2px"></div>
<svg class="a" style="left:685.5px;top:379.1px;" width="5" height="6" viewBox="0 0 5 6"><path d="M1 1 H3 A1.5 1.5 0 0 1 3 5 H1 Z M1 3 H3" fill="none" stroke="#999" stroke-width="0.6"/></svg>
<div class="a" style="left:694.6px;top:377.20000000000005px;width:14.399999999999977px;height:9.8px;background:#eeeeee;border-radius:2px"></div>
<div class="t" style="left:697.8000000000001px;top:379.66px;font-size:6.1px;color:#262626;font-weight:normal;">0</div>
<div class="a" style="left:712.6px;top:377.20000000000005px;width:15.899999999999977px;height:9.8px;background:#eeeeee;border-radius:2px"></div>
<div class="t" style="left:715.8000000000001px;top:379.66px;font-size:6.1px;color:#262626;font-weight:normal;">4</div>
<div class="a" style="left:731.8px;top:377.20000000000005px;width:15.200000000000045px;height:9.8px;background:#eeeeee;border-radius:2px"></div>
<div class="t" style="left:735.0px;top:379.66px;font-size:6.1px;color:#262626;font-weight:normal;">24</div>
<div class="a" style="left:750.6px;top:377.20000000000005px;width:15.600000000000023px;height:9.8px;background:#eeeeee;border-radius:2px"></div>
<div class="t" style="left:753.8000000000001px;top:379.66px;font-size:6.1px;color:#262626;font-weight:normal;">0</div>
<div class="t" style="left:663px;width:30px;text-align:center;top:390.2px;font-size:5.2px;color:#444">Color</div>
<div class="t" style="left:686.8px;width:30px;text-align:center;top:390.2px;font-size:5.2px;color:#444">X</div>
<div class="t" style="left:705.5px;width:30px;text-align:center;top:390.2px;font-size:5.2px;color:#444">Y</div>
<div class="t" style="left:724.4px;width:30px;text-align:center;top:390.2px;font-size:5.2px;color:#444">Blur</div>
<div class="t" style="left:743.4px;width:30px;text-align:center;top:390.2px;font-size:5.2px;color:#444">Spread</div>
<div class="a" style="left:651px;top:398.5px;width:121px;height:0.6px;background:#e6e6e6"></div>
<div class="t" style="left:656px;top:404.68px;font-size:5.8px;color:#666;font-weight:normal;">Inner Shadows</div>
<svg class="a" style="left:745.5px;top:403px;" width="8" height="8" viewBox="0 0 8 8"><circle cx="4" cy="4" r="2.8" fill="none" stroke="#999" stroke-width="0.7"/><path d="M2.3 5.8 L5.8 2.3" stroke="#999" stroke-width="0.7"/></svg>
<svg class="a" style="left:760px;top:403px;" width="4" height="8" viewBox="0 0 4 8"><path d="M2 0.8 V7.2" stroke="#888" stroke-width="0.8"/></svg>
<div class="a" style="left:656px;top:418.3px;width:5.4px;height:5.4px;background:#1a68d6;border-radius:1px"></div>
<svg class="a" style="left:656px;top:418.3px;" width="5.4" height="5.4" viewBox="0 0 5.4 5.4"><path d="M1.3 2.9 L2.3 3.9 L4.2 1.5" fill="none" stroke="#fff" stroke-width="0.8"/></svg>
<div class="a" style="left:665.7px;top:416.1px;width:26px;height:9.8px;background:#fff;border-radius:2px;border:0.6px solid #e2e2e2"></div>
<div class="a" style="left:665.7px;top:416.1px;width:18px;height:9.8px;background:#fde8c4;border-radius:2px 0 0 2px"></div>
<svg class="a" style="left:685.5px;top:418px;" width="5" height="6" viewBox="0 0 5 6"><path d="M1 1 H3 A1.5 1.5 0 0 1 3 5 H1 Z M1 3 H3" fill="none" stroke="#999" stroke-width="0.6"/></svg>
<div class="a" style="left:694.6px;top:416.1px;width:14.399999999999977px;height:9.8px;background:#eeeeee;border-radius:2px"></div>
<div class="t" style="left:697.8000000000001px;top:418.56px;font-size:6.1px;color:#262626;font-weight:normal;">0</div>
<div class="a" style="left:712.6px;top:416.1px;width:15.899999999999977px;height:9.8px;background:#eeeeee;border-radius:2px"></div>
<div class="t" style="left:715.8000000000001px;top:418.56px;font-size:6.1px;color:#262626;font-weight:normal;">37</div>
<div class="a" style="left:731.8px;top:416.1px;width:15.200000000000045px;height:9.8px;background:#eeeeee;border-radius:2px"></div>
<div class="t" style="left:735.0px;top:418.56px;font-size:6.1px;color:#262626;font-weight:normal;">33</div>
<div class="a" style="left:750.6px;top:416.1px;width:15.600000000000023px;height:9.8px;background:#eeeeee;border-radius:2px"></div>
<div class="t" style="left:753.8000000000001px;top:418.56px;font-size:6.1px;color:#262626;font-weight:normal;">0</div>
<div class="t" style="left:663px;width:30px;text-align:center;top:429.09999999999997px;font-size:5.2px;color:#444">Color</div>
<div class="t" style="left:686.8px;width:30px;text-align:center;top:429.09999999999997px;font-size:5.2px;color:#444">X</div>
<div class="t" style="left:705.5px;width:30px;text-align:center;top:429.09999999999997px;font-size:5.2px;color:#444">Y</div>
<div class="t" style="left:724.4px;width:30px;text-align:center;top:429.09999999999997px;font-size:5.2px;color:#444">Blur</div>
<div class="t" style="left:743.4px;width:30px;text-align:center;top:429.09999999999997px;font-size:5.2px;color:#444">Spread</div>
<div class="a" style="left:656px;top:440.40000000000003px;width:5.4px;height:5.4px;background:#1a68d6;border-radius:1px"></div>
<svg class="a" style="left:656px;top:440.40000000000003px;" width="5.4" height="5.4" viewBox="0 0 5.4 5.4"><path d="M1.3 2.9 L2.3 3.9 L4.2 1.5" fill="none" stroke="#fff" stroke-width="0.8"/></svg>
<div class="a" style="left:665.7px;top:438.20000000000005px;width:26px;height:9.8px;background:#fff;border-radius:2px;border:0.6px solid #e2e2e2"></div>
<div class="a" style="left:665.7px;top:438.20000000000005px;width:18px;height:9.8px;background:#ffffff;border-radius:2px 0 0 2px"></div>
<svg class="a" style="left:685.5px;top:440.1px;" width="5" height="6" viewBox="0 0 5 6"><path d="M1 1 H3 A1.5 1.5 0 0 1 3 5 H1 Z M1 3 H3" fill="none" stroke="#999" stroke-width="0.6"/></svg>
<div class="a" style="left:694.6px;top:438.20000000000005px;width:14.399999999999977px;height:9.8px;background:#eeeeee;border-radius:2px"></div>
<div class="t" style="left:697.8000000000001px;top:440.66px;font-size:6.1px;color:#262626;font-weight:normal;">0</div>
<div class="a" style="left:712.6px;top:438.20000000000005px;width:15.899999999999977px;height:9.8px;background:#eeeeee;border-radius:2px"></div>
<div class="t" style="left:715.8000000000001px;top:440.66px;font-size:6.1px;color:#262626;font-weight:normal;">-3</div>
<div class="a" style="left:731.8px;top:438.20000000000005px;width:15.200000000000045px;height:9.8px;background:#eeeeee;border-radius:2px"></div>
<div class="t" style="left:735.0px;top:440.66px;font-size:6.1px;color:#262626;font-weight:normal;">16</div>
<div class="a" style="left:750.6px;top:438.20000000000005px;width:15.600000000000023px;height:9.8px;background:#eeeeee;border-radius:2px"></div>
<div class="t" style="left:753.8000000000001px;top:440.66px;font-size:6.1px;color:#262626;font-weight:normal;">0</div>
<div class="t" style="left:663px;width:30px;text-align:center;top:451.2px;font-size:5.2px;color:#444">Color</div>
<div class="t" style="left:686.8px;width:30px;text-align:center;top:451.2px;font-size:5.2px;color:#444">X</div>
<div class="t" style="left:705.5px;width:30px;text-align:center;top:451.2px;font-size:5.2px;color:#444">Y</div>
<div class="t" style="left:724.4px;width:30px;text-align:center;top:451.2px;font-size:5.2px;color:#444">Blur</div>
<div class="t" style="left:743.4px;width:30px;text-align:center;top:451.2px;font-size:5.2px;color:#444">Spread</div>
<div class="a" style="left:656px;top:462.6px;width:5.4px;height:5.4px;background:#1a68d6;border-radius:1px"></div>
<svg class="a" style="left:656px;top:462.6px;" width="5.4" height="5.4" viewBox="0 0 5.4 5.4"><path d="M1.3 2.9 L2.3 3.9 L4.2 1.5" fill="none" stroke="#fff" stroke-width="0.8"/></svg>
<div class="a" style="left:665.7px;top:460.40000000000003px;width:26px;height:9.8px;background:#fff;border-radius:2px;border:0.6px solid #e2e2e2"></div>
<div class="a" style="left:665.7px;top:460.40000000000003px;width:18px;height:9.8px;background:#9bbbf7;border-radius:2px 0 0 2px"></div>
<svg class="a" style="left:685.5px;top:462.3px;" width="5" height="6" viewBox="0 0 5 6"><path d="M1 1 H3 A1.5 1.5 0 0 1 3 5 H1 Z M1 3 H3" fill="none" stroke="#999" stroke-width="0.6"/></svg>
<div class="a" style="left:694.6px;top:460.40000000000003px;width:14.399999999999977px;height:9.8px;background:#eeeeee;border-radius:2px"></div>
<div class="t" style="left:697.8000000000001px;top:462.86px;font-size:6.1px;color:#262626;font-weight:normal;">0</div>
<div class="a" style="left:712.6px;top:460.40000000000003px;width:15.899999999999977px;height:9.8px;background:#eeeeee;border-radius:2px"></div>
<div class="t" style="left:715.8000000000001px;top:462.86px;font-size:6.1px;color:#262626;font-weight:normal;">17</div>
<div class="a" style="left:731.8px;top:460.40000000000003px;width:15.200000000000045px;height:9.8px;background:#eeeeee;border-radius:2px"></div>
<div class="t" style="left:735.0px;top:462.86px;font-size:6.1px;color:#262626;font-weight:normal;">53</div>
<div class="a" style="left:750.6px;top:460.40000000000003px;width:15.600000000000023px;height:9.8px;background:#eeeeee;border-radius:2px"></div>
<div class="t" style="left:753.8000000000001px;top:462.86px;font-size:6.1px;color:#262626;font-weight:normal;">0</div>
<div class="t" style="left:663px;width:30px;text-align:center;top:473.4px;font-size:5.2px;color:#444">Color</div>
<div class="t" style="left:686.8px;width:30px;text-align:center;top:473.4px;font-size:5.2px;color:#444">X</div>
<div class="t" style="left:705.5px;width:30px;text-align:center;top:473.4px;font-size:5.2px;color:#444">Y</div>
<div class="t" style="left:724.4px;width:30px;text-align:center;top:473.4px;font-size:5.2px;color:#444">Blur</div>
<div class="t" style="left:743.4px;width:30px;text-align:center;top:473.4px;font-size:5.2px;color:#444">Spread</div>
<div class="a" style="left:656px;top:484.7px;width:5.4px;height:5.4px;background:#1a68d6;border-radius:1px"></div>
<svg class="a" style="left:656px;top:484.7px;" width="5.4" height="5.4" viewBox="0 0 5.4 5.4"><path d="M1.3 2.9 L2.3 3.9 L4.2 1.5" fill="none" stroke="#fff" stroke-width="0.8"/></svg>
<div class="a" style="left:665.7px;top:482.5px;width:26px;height:9.8px;background:#fff;border-radius:2px;border:0.6px solid #e2e2e2"></div>
<div class="a" style="left:665.7px;top:482.5px;width:18px;height:9.8px;background:#f7c2ab;border-radius:2px 0 0 2px"></div>
<svg class="a" style="left:685.5px;top:484.4px;" width="5" height="6" viewBox="0 0 5 6"><path d="M1 1 H3 A1.5 1.5 0 0 1 3 5 H1 Z M1 3 H3" fill="none" stroke="#999" stroke-width="0.6"/></svg>
<div class="a" style="left:694.6px;top:482.5px;width:14.399999999999977px;height:9.8px;background:#eeeeee;border-radius:2px"></div>
<div class="t" style="left:697.8000000000001px;top:484.96px;font-size:6.1px;color:#262626;font-weight:normal;">0</div>
<div class="a" style="left:712.6px;top:482.5px;width:15.899999999999977px;height:9.8px;background:#eeeeee;border-radius:2px"></div>
<div class="t" style="left:715.8000000000001px;top:484.96px;font-size:6.1px;color:#262626;font-weight:normal;">-23</div>
<div class="a" style="left:731.8px;top:482.5px;width:15.200000000000045px;height:9.8px;background:#eeeeee;border-radius:2px"></div>
<div class="t" style="left:735.0px;top:484.96px;font-size:6.1px;color:#262626;font-weight:normal;">53</div>
<div class="a" style="left:750.6px;top:482.5px;width:15.600000000000023px;height:9.8px;background:#eeeeee;border-radius:2px"></div>
<div class="t" style="left:753.8000000000001px;top:484.96px;font-size:6.1px;color:#262626;font-weight:normal;">0</div>
<div class="t" style="left:663px;width:30px;text-align:center;top:495.49999999999994px;font-size:5.2px;color:#444">Color</div>
<div class="t" style="left:686.8px;width:30px;text-align:center;top:495.49999999999994px;font-size:5.2px;color:#444">X</div>
<div class="t" style="left:705.5px;width:30px;text-align:center;top:495.49999999999994px;font-size:5.2px;color:#444">Y</div>
<div class="t" style="left:724.4px;width:30px;text-align:center;top:495.49999999999994px;font-size:5.2px;color:#444">Blur</div>
<div class="t" style="left:743.4px;width:30px;text-align:center;top:495.49999999999994px;font-size:5.2px;color:#444">Spread</div>
<div class="a" style="left:656px;top:506.90000000000003px;width:5.4px;height:5.4px;background:#1a68d6;border-radius:1px"></div>
<svg class="a" style="left:656px;top:506.90000000000003px;" width="5.4" height="5.4" viewBox="0 0 5.4 5.4"><path d="M1.3 2.9 L2.3 3.9 L4.2 1.5" fill="none" stroke="#fff" stroke-width="0.8"/></svg>
<div class="a" style="left:665.7px;top:504.70000000000005px;width:26px;height:9.8px;background:#fff;border-radius:2px;border:0.6px solid #e2e2e2"></div>
<div class="a" style="left:665.7px;top:504.70000000000005px;width:18px;height:9.8px;background:repeating-conic-gradient(#9ea6f2 0 25%,#b0b8f6 0 50%) 0 0/4px 4px;border-radius:2px 0 0 2px"></div>
<svg class="a" style="left:685.5px;top:506.6px;" width="5" height="6" viewBox="0 0 5 6"><path d="M1 1 H3 A1.5 1.5 0 0 1 3 5 H1 Z M1 3 H3" fill="none" stroke="#999" stroke-width="0.6"/></svg>
<div class="a" style="left:694.6px;top:504.70000000000005px;width:14.399999999999977px;height:9.8px;background:#eeeeee;border-radius:2px"></div>
<div class="t" style="left:697.8000000000001px;top:507.16px;font-size:6.1px;color:#262626;font-weight:normal;">0</div>
<div class="a" style="left:712.6px;top:504.70000000000005px;width:15.899999999999977px;height:9.8px;background:#eeeeee;border-radius:2px"></div>
<div class="t" style="left:715.8000000000001px;top:507.16px;font-size:6.1px;color:#262626;font-weight:normal;">-36</div>
<div class="a" style="left:731.8px;top:504.70000000000005px;width:15.200000000000045px;height:9.8px;background:#eeeeee;border-radius:2px"></div>
<div class="t" style="left:735.0px;top:507.16px;font-size:6.1px;color:#262626;font-weight:normal;">53</div>
<div class="a" style="left:750.6px;top:504.70000000000005px;width:15.600000000000023px;height:9.8px;background:#eeeeee;border-radius:2px"></div>
<div class="t" style="left:753.8000000000001px;top:507.16px;font-size:6.1px;color:#262626;font-weight:normal;">0</div>
<div class="t" style="left:663px;width:30px;text-align:center;top:517.7px;font-size:5.2px;color:#444">Color</div>
<div class="t" style="left:686.8px;width:30px;text-align:center;top:517.7px;font-size:5.2px;color:#444">X</div>
<div class="t" style="left:705.5px;width:30px;text-align:center;top:517.7px;font-size:5.2px;color:#444">Y</div>
<div class="t" style="left:724.4px;width:30px;text-align:center;top:517.7px;font-size:5.2px;color:#444">Blur</div>
<div class="t" style="left:743.4px;width:30px;text-align:center;top:517.7px;font-size:5.2px;color:#444">Spread</div>
<div class="a" style="left:651px;top:526px;width:121px;height:0.6px;background:#e6e6e6"></div>
<div class="t" style="left:656px;top:532.38px;font-size:5.8px;color:#666;font-weight:normal;">Blur</div>
<svg class="a" style="left:758px;top:530.7px;" width="8" height="8" viewBox="0 0 8 8"><path d="M4 0.6 V7.4 M0.6 4 H7.4" stroke="#666" stroke-width="0.7"/></svg>
<div class="a" style="left:651px;top:542.5px;width:121px;height:0.6px;background:#e6e6e6"></div>
<div class="t" style="left:656px;top:549.00px;font-size:5.0px;color:#444;font-weight:normal;letter-spacing:0.15px">MAKE EXPORTABLE</div>
<svg class="a" style="left:758px;top:547px;" width="8" height="8" viewBox="0 0 8 8"><path d="M4 0.6 V7.4 M0.6 4 H7.4" stroke="#666" stroke-width="0.7"/></svg>
<svg class="a" style="left:157.5px;top:37px;" width="9" height="9" viewBox="0 0 9 9"><path d="M4.5 0.8 V8.2 M0.8 4.5 H8.2" stroke="#333" stroke-width="0.9"/></svg>
<svg class="a" style="left:169.8px;top:40.5px;" width="4" height="3" viewBox="0 0 4 3"><path d="M0.6 0.6 L2 2.2 L3.4 0.6" fill="none" stroke="#444" stroke-width="0.7"/></svg>
<div class="t" style="left:182.6px;top:35.8px;font-size:6.95px;color:#2a2a2a;letter-spacing:0.05px">sketch design <b style="color:#1e1e1e">challenge pearl</b></div>
<div class="t" style="left:182.6px;top:43.88px;font-size:5.8px;color:#8a8a8a;font-weight:normal;">Workspace Document</div>
<svg class="a" style="left:436px;top:36.8px;" width="10" height="8.5" viewBox="0 0 10 8.5"><circle cx="4" cy="4.2" r="3.3" fill="#bbb" stroke="#444" stroke-width="0.8"/><circle cx="6" cy="4.2" r="3.3" fill="none" stroke="#444" stroke-width="0.8"/></svg>
<svg class="a" style="left:460.8px;top:36.6px;" width="10" height="9" viewBox="0 0 10 9"><path d="M2 0.8 H1 V8 H2 M8 0.8 H9 V8 H8" fill="none" stroke="#555" stroke-width="0.8"/><path d="M5 2 L7 4.4 L5 6.8 L3 4.4 Z" fill="none" stroke="#444" stroke-width="0.8"/></svg>
<svg class="a" style="left:498.7px;top:37.1px;" width="9" height="9" viewBox="0 0 9 9"><rect x="1" y="3.6" width="3.8" height="3.8" fill="#ccc"/><rect x="0.6" y="3.2" width="4.6" height="4.6" rx="0.8" fill="none" stroke="#999" stroke-width="0.8"/><rect x="3.4" y="0.6" width="4.6" height="4.6" rx="0.8" fill="none" stroke="#999" stroke-width="0.8"/></svg>
<svg class="a" style="left:519.5px;top:37.1px;" width="9" height="9" viewBox="0 0 9 9"><rect x="0.6" y="3.2" width="4.6" height="4.6" rx="0.8" fill="none" stroke="#999" stroke-width="0.8"/><rect x="3.4" y="0.6" width="4.6" height="4.6" rx="0.8" fill="none" stroke="#999" stroke-width="0.8"/></svg>
<svg class="a" style="left:541.7px;top:37.1px;" width="9" height="9" viewBox="0 0 9 9"><rect x="3.4" y="3.2" width="1.8" height="2" fill="#bbb"/><rect x="0.6" y="3.2" width="4.6" height="4.6" rx="0.8" fill="none" stroke="#999" stroke-width="0.8"/><rect x="3.4" y="0.6" width="4.6" height="4.6" rx="0.8" fill="none" stroke="#999" stroke-width="0.8"/></svg>
<svg class="a" style="left:562.7px;top:37.1px;" width="9" height="9" viewBox="0 0 9 9"><rect x="3.8" y="1" width="3.8" height="3.8" fill="#ccc"/><rect x="0.6" y="3.2" width="4.6" height="4.6" rx="0.8" fill="none" stroke="#999" stroke-width="0.8"/><rect x="3.4" y="0.6" width="4.6" height="4.6" rx="0.8" fill="none" stroke="#999" stroke-width="0.8"/></svg>
<svg class="a" style="left:592.5px;top:37.2px;" width="9" height="9" viewBox="0 0 9 9"><g transform="rotate(-45 4.5 4.5)"><rect x="0.6" y="2.9" width="4.8" height="3.2" rx="1.6" fill="none" stroke="#aaa" stroke-width="0.8"/><rect x="3.6" y="2.9" width="4.8" height="3.2" rx="1.6" fill="none" stroke="#aaa" stroke-width="0.8"/></g></svg>
<svg class="a" style="left:616px;top:37.3px;" width="10" height="8" viewBox="0 0 10 8"><rect x="0.5" y="0.5" width="9" height="7" rx="0.8" fill="#ddd" stroke="#aaa" stroke-width="0.7"/><path d="M0.5 2.6 H9.5 M0.5 4.6 H9.5 M3.5 2.6 V7.5 M6.5 2.6 V7.5" stroke="#aaa" stroke-width="0.5"/></svg>
<svg class="a" style="left:705.5px;top:37px;" width="10" height="9" viewBox="0 0 10 9"><path d="M2 0.6 L7.2 7 M7.5 0.6 L3 6.6" stroke="#444" stroke-width="0.9" fill="none"/><circle cx="2.2" cy="7.2" r="1.2" fill="none" stroke="#444" stroke-width="0.8"/><circle cx="8.2" cy="7.6" r="1.2" fill="none" stroke="#444" stroke-width="0.8"/></svg>
<svg class="a" style="left:748.5px;top:37.2px;" width="9" height="9" viewBox="0 0 9 9"><path d="M4.5 1.2 C2.6 1.2 2 2.6 2 4.2 V6 L1 7.2 H8 L7 6 V4.2 C7 2.6 6.4 1.2 4.5 1.2 Z" fill="#c8c8c8" stroke="#555" stroke-width="0.8"/><path d="M3.6 7.9 H5.4" stroke="#555" stroke-width="0.8"/></svg>
<div class="a" style="left:753.1px;top:33.7px;width:8px;height:8px;background:#c8151f;border-radius:50%"></div>
<div class="t" style="left:753.1px;width:8px;text-align:center;top:35.1px;font-size:5.2px;color:#fff;font-weight:bold;-webkit-text-stroke:0">1</div>
<div class="t" style="left:418px;top:59.2px;font-size:6px;color:#444;-webkit-text-stroke:0">sketch design challenge pearl</div>
<div class="a" style="left:757px;top:55px;width:15px;height:13.5px;background:#dedede"></div>
<svg class="a" style="left:760.5px;top:58px;" width="8" height="8" viewBox="0 0 8 8"><path d="M4 0.8 V7.2 M0.8 4 H7.2" stroke="#777" stroke-width="0.8"/></svg>
</div></body></html>
